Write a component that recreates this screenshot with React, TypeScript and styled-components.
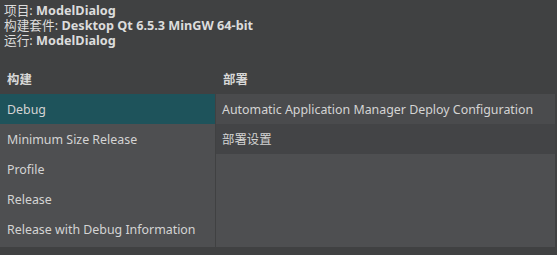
import React from "react";
import styled, { createGlobalStyle } from "styled-components";

const GlobalStyle = createGlobalStyle`
  html, body {
    margin: 0;
    padding: 0;
    background: #404142;
  }
  body {
    width: 557px;
    height: 255px;
    overflow: hidden;
    font-family: "Noto Sans", "Noto Sans CJK SC", sans-serif;
    color: #d6d6d6;
  }
`;

const Page = styled.div`
  width: 557px;
  height: 255px;
  display: flex;
  flex-direction: column;
  background: #404142;
`;

const Info = styled.div`
  padding: 3px 4px 0;
  font-size: 12.7px;
  line-height: 15px;
  color: #dcdcdc;
  b {
    font-weight: 700;
  }
`;

const Columns = styled.div`
  margin-top: 16px;
  display: grid;
  grid-template-columns: 215px 1fr;
  column-gap: 1px;
  margin-right: 2px;
`;

const Column = styled.div`
  display: flex;
  flex-direction: column;
`;

const HeadCell = styled.div`
  height: 30px;
  padding-left: 7px;
  display: flex;
  align-items: center;
  font-size: 12.4px;
  font-weight: 700;
  color: #d8d8d8;
`;

const List = styled.div`
  height: 153px;
  background: #4e4f51;
  display: flex;
  flex-direction: column;
`;

const Item = styled.div<{ $bg?: string; $indent?: number }>`
  height: 30px;
  flex: none;
  display: flex;
  align-items: center;
  padding-left: ${(p) => p.$indent ?? 7}px;
  font-size: 12.4px;
  color: #d4d4d4;
  background: ${(p) => p.$bg ?? "transparent"};
  white-space: nowrap;
`;

const builds = [
  "Debug",
  "Minimum Size Release",
  "Profile",
  "Release",
  "Release with Debug Information",
];

export default function App() {
  return (
    <Page>
      <GlobalStyle />
      <Info>
        <div>
          项目: <b>ModelDialog</b>
        </div>
        <div>
          构建套件: <b>Desktop Qt 6.5.3 MinGW 64-bit</b>
        </div>
        <div>
          运行: <b>ModelDialog</b>
        </div>
      </Info>
      <Columns>
        <Column>
          <HeadCell>构建</HeadCell>
          <List>
            {builds.map((b, i) => (
              <Item key={b} $bg={i === 0 ? "#1e535b" : undefined}>
                {b}
              </Item>
            ))}
          </List>
        </Column>
        <Column>
          <HeadCell>部署</HeadCell>
          <List>
            <Item $bg="#4a4b4d" $indent={6}>
              Automatic Application Manager Deploy Configuration
            </Item>
            <Item $bg="#434446" $indent={6}>
              部署设置
            </Item>
          </List>
        </Column>
      </Columns>
    </Page>
  );
}
